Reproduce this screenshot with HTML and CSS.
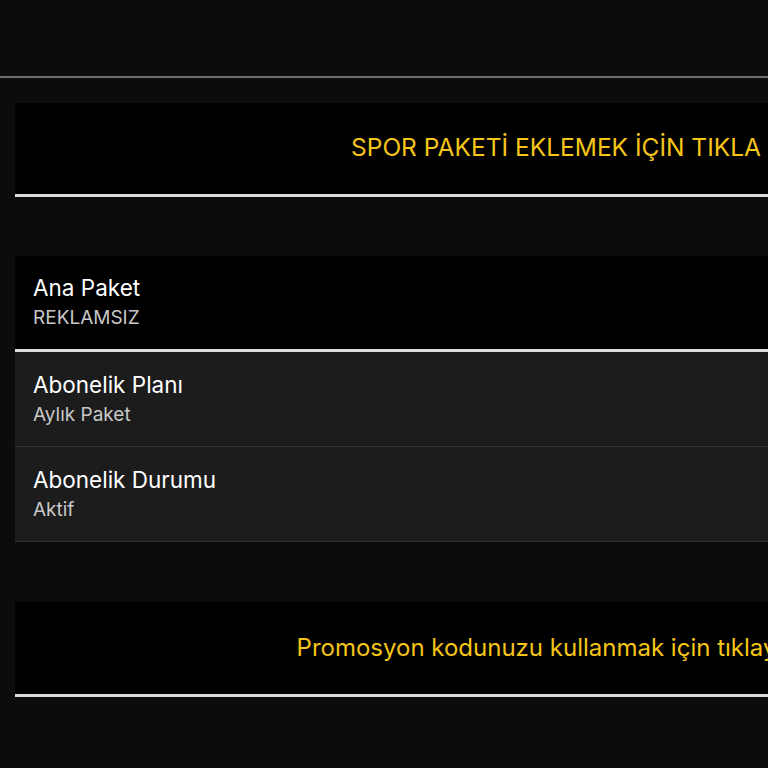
FILE: index.html
```html
<html>

<head>
	<title>Hesabım</title>
	<link rel="stylesheet" href="styles.css">
</head>

<body>
	<div class="topbar"></div>

	<div class="page">
		<div class="actioncard">
			<span class="actiontext">SPOR PAKETİ EKLEMEK İÇİN TIKLA</span>
		</div>

		<div class="infolist">
			<div class="inforow mainrow">
				<div class="infotitle">Ana Paket</div>
				<div class="infovalue">REKLAMSIZ</div>
			</div>
			<div class="inforow">
				<div class="infotitle">Abonelik Planı</div>
				<div class="infovalue">Aylık Paket</div>
			</div>
			<div class="inforow">
				<div class="infotitle">Abonelik Durumu</div>
				<div class="infovalue">Aktif</div>
			</div>
		</div>

		<div class="actioncard promo">
			<span class="actiontext">Promosyon kodunuzu kullanmak için tıklayınız</span>
		</div>
	</div>
</body>
</html>
```

FILE: styles.css
```css
html, body {
	overflow: hidden;
}

body {
	margin: 0;
	width: 1112px;
	background-color: #0c0c0c;
	color: #ffffff;
	font-family: Inter, "Noto Sans", sans-serif;
}

.topbar {
	height: 76px;
	border-bottom: 2px solid #6e6e6e;
}

.page {
	padding: 25px 15px 0 15px;
	display: flex;
	flex-direction: column;
	gap: 59px;
}

.actioncard {
	height: 94px;
	box-sizing: border-box;
	padding-bottom: 3px;
	background-color: #000000;
	border-bottom: 3px solid #dcdcdc;
	display: flex;
	align-items: center;
	justify-content: center;
}

.actioncard.promo {
	height: 95px;
	margin-top: 1px;
	padding-bottom: 1px;
}

.actiontext {
	color: #f5c518;
	font-size: 24.5px;
}

.promo .actiontext {
	font-size: 24px;
}

.infolist {
	display: flex;
	flex-direction: column;
}

.inforow {
	height: 95px;
	box-sizing: border-box;
	padding: 0 18px 2px 18px;
	background-color: #1c1c1c;
	border-bottom: 1px solid #333333;
	display: flex;
	flex-direction: column;
	justify-content: center;
	gap: 5px;
}

.mainrow {
	height: 96px;
	background-color: #000000;
	border-bottom: 3px solid #dcdcdc;
}

.infotitle {
	font-size: 22.5px;
}

.infovalue {
	font-size: 19px;
	color: #c8c8c8;
}
```
